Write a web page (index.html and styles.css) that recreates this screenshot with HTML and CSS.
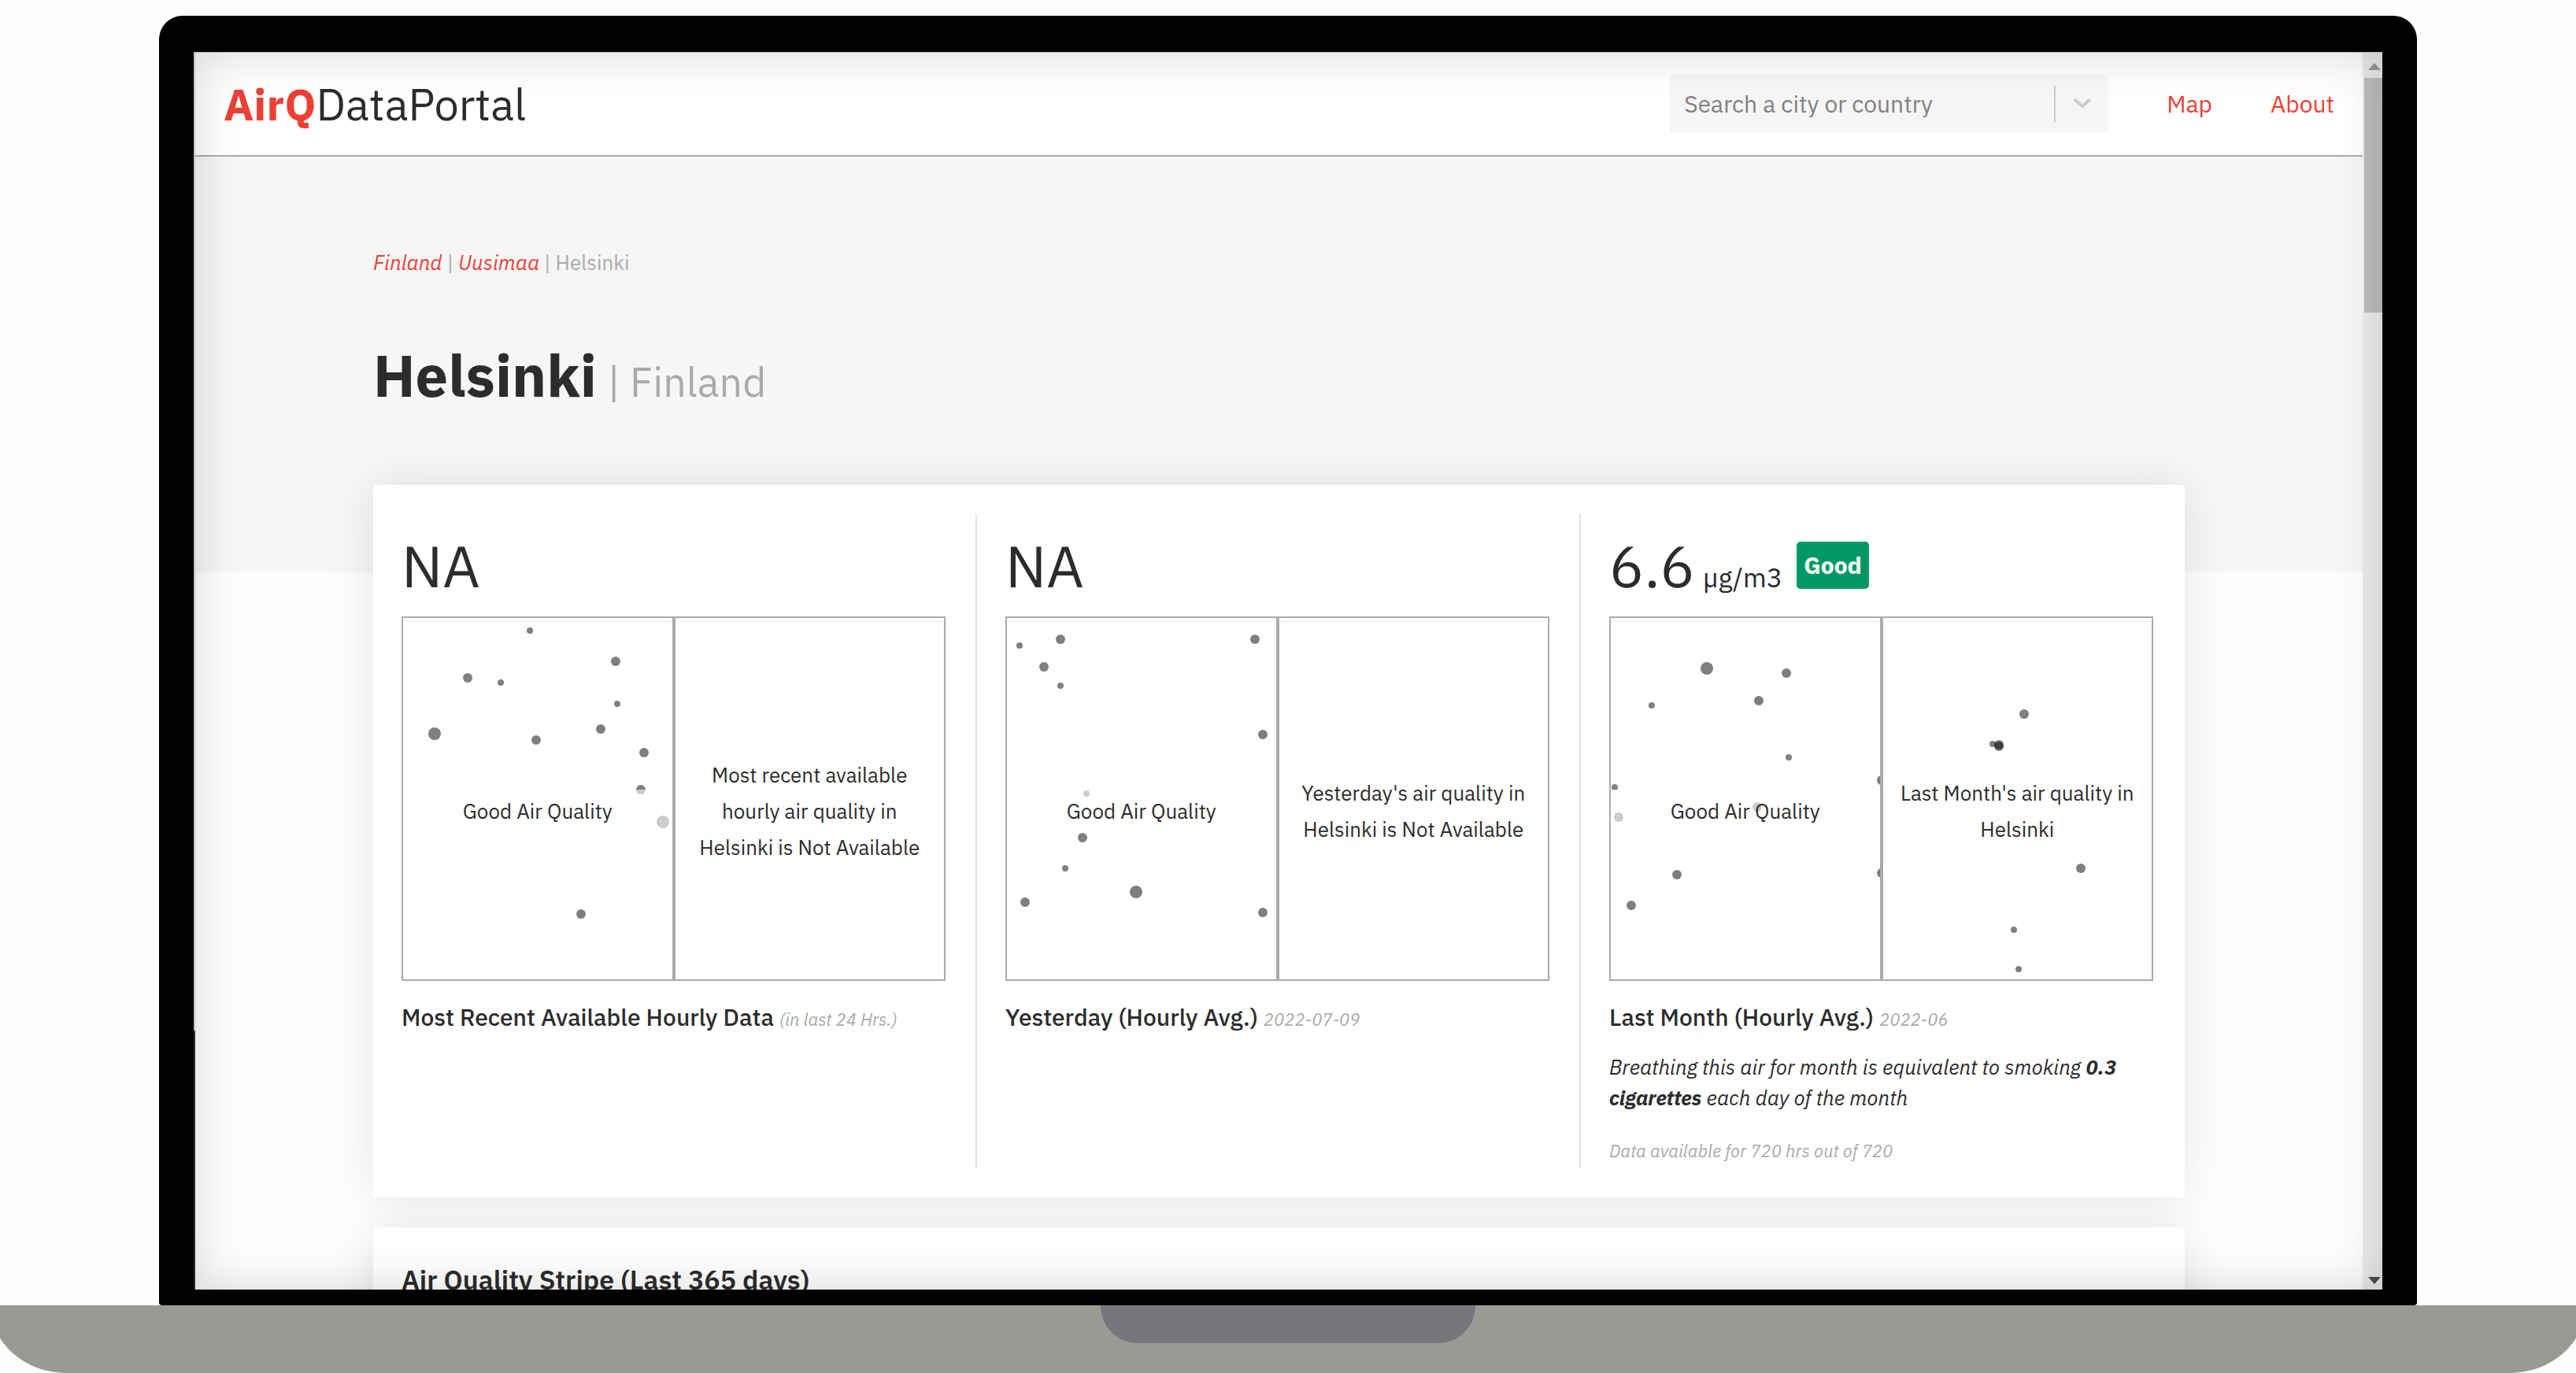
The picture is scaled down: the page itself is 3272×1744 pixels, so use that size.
FILE: index.html
```html
<!DOCTYPE html>
<html lang="en">
<head>
<meta charset="utf-8">
<title>AirQDataPortal - Helsinki</title>
<link rel="stylesheet" href="styles.css">
</head>
<body>
<div class="bezel">
  <div class="screen">
    <div class="page">
      <header class="topbar">
        <a class="logo" href="#"><b>AirQ</b>DataPortal</a>
        <div class="search">
          <input class="search-input" type="text" placeholder="Search a city or country" aria-label="Search a city or country">
          <button class="search-toggle" type="button" aria-label="Show options">
            <svg width="24" height="14" viewBox="0 0 24 14" fill="none" stroke="#ccc" stroke-width="4" stroke-linecap="round" stroke-linejoin="round"><path d="M3 3l9 8 9-8"/></svg>
          </button>
        </div>
        <nav class="nav"><a href="#">Map</a><a href="#">About</a></nav>
      </header>
      <main class="main">
        <nav class="crumbs" aria-label="Breadcrumb"><a href="#">Finland</a> | <a href="#">Uusimaa</a> | Helsinki</nav>
        <h1 class="title">Helsinki <span class="country">| Finland</span></h1>

        <section class="card stats">
          <article class="stat">
            <div class="value">NA</div>
            <div class="panels">
              <div class="panel">
                <svg class="dots" viewBox="0 0 344 459" preserveAspectRatio="xMinYMin slice">
                  <circle cx="161" cy="16" r="4"/><circle cx="270" cy="55" r="6"/><circle cx="82" cy="76" r="6"/><circle cx="124" cy="82" r="4"/><circle cx="272" cy="109" r="4"/><circle cx="251" cy="141" r="6"/><circle cx="40" cy="147" r="8"/><circle cx="169" cy="155" r="6"/><circle cx="306" cy="171" r="6"/><circle cx="302" cy="218" r="6"/><circle cx="330" cy="259" r="8"/><circle cx="226" cy="376" r="6"/>
                </svg>
                <p class="label">Good Air Quality</p>
              </div>
              <div class="panel"><p class="label">Most recent available hourly air quality in Helsinki is Not Available</p></div>
            </div>
            <h2 class="caption">Most Recent Available Hourly Data <small>(in last 24 Hrs.)</small></h2>
          </article>

          <article class="stat">
            <div class="value">NA</div>
            <div class="panels">
              <div class="panel">
                <svg class="dots" viewBox="0 0 344 459" preserveAspectRatio="xMinYMin slice">
                  <circle cx="16" cy="35" r="4"/><circle cx="68" cy="27" r="6"/><circle cx="315" cy="27" r="6"/><circle cx="47" cy="62" r="6"/><circle cx="68" cy="86" r="4"/><circle cx="325" cy="148" r="6"/><circle cx="101" cy="223" r="4"/><circle cx="96" cy="279" r="6"/><circle cx="74" cy="318" r="4"/><circle cx="164" cy="348" r="8"/><circle cx="23" cy="361" r="6"/><circle cx="325" cy="374" r="6"/>
                </svg>
                <p class="label">Good Air Quality</p>
              </div>
              <div class="panel"><p class="label">Yesterday's air quality in Helsinki is Not Available</p></div>
            </div>
            <h2 class="caption">Yesterday (Hourly Avg.) <small>2022-07-09</small></h2>
          </article>

          <article class="stat">
            <div class="value">6.6 <span class="unit">µg/m3</span> <span class="badge">Good</span></div>
            <div class="panels">
              <div class="panel">
                <svg class="dots" viewBox="0 0 344 459" preserveAspectRatio="xMinYMin slice">
                  <circle cx="122" cy="64" r="8"/><circle cx="223" cy="70" r="6"/><circle cx="188" cy="105" r="6"/><circle cx="52" cy="111" r="4"/><circle cx="226" cy="177" r="4"/><circle cx="5" cy="215" r="4"/><circle cx="10" cy="253" r="6"/><circle cx="186" cy="240" r="6"/><circle cx="84" cy="326" r="6"/><circle cx="26" cy="365" r="6"/><circle cx="344" cy="206" r="6"/><circle cx="344" cy="324" r="6"/>
                </svg>
                <p class="label">Good Air Quality</p>
              </div>
              <div class="panel">
                <svg class="dots" viewBox="0 0 344 459" preserveAspectRatio="xMinYMin slice">
                  <circle cx="179" cy="122" r="6"/><circle cx="139" cy="160" r="4"/><circle cx="147" cy="161" r="6"/><circle cx="147" cy="163" r="6"/><circle cx="251" cy="318" r="6"/><circle cx="166" cy="396" r="4"/><circle cx="172" cy="446" r="4"/>
                </svg>
                <p class="label">Last Month's air quality in Helsinki</p>
              </div>
            </div>
            <h2 class="caption">Last Month (Hourly Avg.) <small>2022-06</small></h2>
            <p class="note">Breathing this air for month is equivalent to smoking <b>0.3 cigarettes</b> each day of the month</p>
            <p class="coverage">Data available for 720 hrs out of 720</p>
          </article>
        </section>

        <section class="card stripe">
          <h2 class="stripe-title">Air Quality Stripe (Last 365 days)</h2>
        </section>
      </main>
    </div>
    <div class="scrollbar" aria-hidden="true">
      <svg class="arrow" width="16" height="9" viewBox="0 0 16 9"><path d="M8 0l8 9H0z" fill="#999"/></svg>
      <div class="thumb"></div>
      <svg class="arrow" width="16" height="9" viewBox="0 0 16 9"><path d="M0 0h16L8 9z" fill="#4d4f4d"/></svg>
    </div>
  </div>
</div>
<div class="base"><div class="notch"></div></div>
</body>
</html>
```

FILE: styles.css
```css
* { box-sizing: border-box; }

body {
  margin: 0;
  height: 100vh;
  display: flex;
  flex-direction: column;
  overflow: hidden;
  background: #fefefe;
  color: #2c2c2c;
  font: 26px/40px "IBM Plex Sans", "Open Sans", "Noto Sans", sans-serif;
}

h1, h2, p { margin: 0; }
a { color: #ec4034; text-decoration: none; }

/* laptop frame */
.bezel {
  flex: 1;
  min-height: 0;
  display: flex;
  margin: 20px 202px 0;
  padding: 46px 44px 20px;
  background: #000;
  border-radius: 30px 30px 4px 4px;
}

.screen {
  position: relative;
  flex: 1;
  display: flex;
  overflow: hidden;
  background: #fefefe;
}

.screen::after {
  content: "";
  position: absolute;
  inset: 0;
  pointer-events: none;
  border-top: 1px solid #c4bfc1;
  border-left: 2px solid;
  border-image: linear-gradient(#c4bfc1 79%, #2c2c2c 79%) 1;
  box-shadow: inset 0 0 60px rgba(0, 0, 0, .16);
}

.page { flex: 1; min-width: 0; }

.base {
  flex: none;
  height: 86px;
  margin: 0 -12px;
  background: #9a9993;
  border-radius: 0 0 96px 96px / 0 0 86px 86px;
}

.notch {
  width: 476px;
  height: 48px;
  margin: 0 auto;
  background: #77767b;
  border-radius: 0 0 46px 46px / 0 0 48px 48px;
}

/* scrollbar */
.scrollbar {
  width: 25px;
  display: flex;
  flex-direction: column;
  padding: 14px 0 7px 2px;
  background: #ececec;
}
.arrow { flex: none; margin-left: 5px; }
.thumb { height: 298px; margin: 10px 0 auto; background: #bdbdbd; }

/* header */
.topbar {
  display: flex;
  align-items: center;
  height: 133px;
  padding: 0 36px 0 38px;
  background: #fff;
  border-bottom: 2px solid #aaa;
  font-size: 30px;
}
.logo { margin-right: auto; color: #2c2c2c; font-size: 56px; line-height: 72px; }
.logo b { color: #ec4034; font-weight: 700; }

.search {
  display: flex;
  align-items: center;
  width: 557px;
  height: 74px;
  margin-right: 74px;
  background: #f6f6f6;
}
.search-input {
  flex: 1;
  min-width: 0;
  padding: 0 0 0 18px;
  border: 0;
  background: none;
  color: #2c2c2c;
  font: inherit;
}
.search-input::placeholder { color: #808080; opacity: 1; }
.search-toggle {
  width: 69px;
  height: 46px;
  padding: 2px 0 0;
  border: 0;
  border-left: 2px solid #ccc;
  background: none;
}
.nav { display: flex; gap: 74px; }

/* content */
.main {
  padding: 114px 226px 0 228px;
  background: linear-gradient(#f6f6f6 528px, #fefefe 528px);
}
.crumbs { color: #aaa; }
.crumbs a { font-style: italic; }

.title {
  margin: 71px 0 79px;
  font-size: 74px;
  line-height: 105px;
  font-weight: 700;
}
.country { margin-left: -4px; color: #aaa; font-size: 52px; font-weight: 400; }

.card { background: #fff; box-shadow: 0 0 56px rgba(0, 0, 0, .1); }

.stats { display: grid; grid-template-columns: repeat(3, 1fr); padding: 37px 0; }
.stat { padding: 22px 38px 0 36px; border-right: 2px solid #e2e2e2; }
.stat:last-child { border-right-color: transparent; }

.value { display: flex; align-items: baseline; height: 108px; font-size: 74px; line-height: 86px; }
.unit { margin-left: 10px; font-size: 34px; line-height: 40px; }
.badge {
  align-self: flex-start;
  margin: 13px 0 0 18px;
  padding: 0 9px;
  border-radius: 5px;
  background: #096;
  color: #fff;
  font-size: 30px;
  line-height: 60px;
  font-weight: 700;
}

.panels { display: grid; grid-template-columns: 1fr 1fr; }
.panel {
  position: relative;
  display: flex;
  align-items: center;
  justify-content: center;
  height: 463px;
  padding: 30px 16px 0;
  border: 2px solid #aaa;
}
.dots { position: absolute; inset: 0; width: 100%; height: 100%; fill: #000; fill-opacity: .5; }
.label {
  position: relative;
  flex: 1;
  margin: 0 -16px;
  padding: 4px 16px;
  background: rgba(255, 255, 255, .6);
  line-height: 46px;
  text-align: center;
}

.caption { padding-top: 24px; font-size: 30px; line-height: 44px; font-weight: 500; }
.caption small { color: #aaa; font-size: 22px; font-weight: 400; font-style: italic; }
.note { padding-top: 19px; line-height: 39px; font-style: italic; }
.coverage { padding: 28px 0 3px; color: #aaa; font-size: 22px; line-height: 39px; font-style: italic; }

.stripe { margin-top: 38px; padding: 42px 36px; }
.stripe-title { font-size: 34px; line-height: 48px; font-weight: 600; }
```
